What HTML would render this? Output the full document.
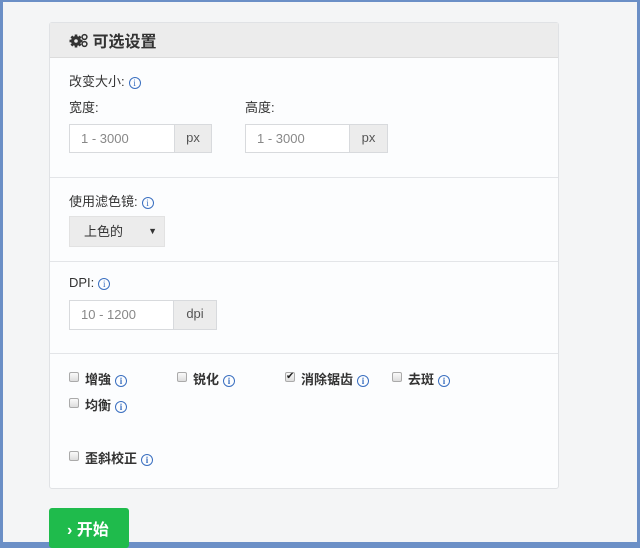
<!DOCTYPE html>
<html><head><meta charset="utf-8"><style>
*{box-sizing:border-box;margin:0;padding:0}
body{width:640px;height:546px;overflow:hidden;background:#6b8fc6;font-family:"Liberation Sans","Noto Sans CJK SC",sans-serif;color:#333;position:relative}
#frame{position:absolute;left:3px;top:2px;right:3px;bottom:4px;background:#f4f5f6}
.a{position:absolute}
#panel{left:46px;top:20px;width:510px;height:467px;background:#fcfdfe;border:1px solid #e0e2e5;border-radius:3px}
#hdr{left:0;top:0;width:508px;height:35px;background:#ececec;border-bottom:1px solid #dcdcdc;font-size:16px;font-weight:bold;color:#333;padding:5px 0 0 19px}
.sep{left:0;width:508px;height:1px;background:#e3e5e8}
.lbl{font-size:13px;color:#333}
.i{display:inline-block;width:12px;height:12px;border:1px solid #3a6fc0;border-radius:50%;color:#3a6fc0;font-size:9px;line-height:10px;text-align:center;font-family:"Liberation Serif",serif;vertical-align:0px;margin-left:4px}
.in{border:1px solid #d8dadd;background:#fff;font-size:13px;color:#888;padding-left:11px}
.ad{border:1px solid #d8dadd;background:#ececec;font-size:13px;color:#555;text-align:center}
.cb{width:10px;height:10px;border:1px solid #aaa;background:linear-gradient(#fafafa,#ddd);border-radius:2px}
.cl{font-size:13px;font-weight:bold;color:#333}
</style></head><body>
<div id="frame">
<div id="panel" class="a">
<div id="hdr" class="a"><svg width="19" height="15" viewBox="0 0 19 15" style="vertical-align:-1px"><g fill="#333"><circle cx="7" cy="8" r="5"/><g stroke="#333" stroke-width="2.6"><line x1="7" y1="1.5" x2="7" y2="14.5"/><line x1="0.5" y1="8" x2="13.5" y2="8"/><line x1="2.4" y1="3.4" x2="11.6" y2="12.6"/><line x1="11.6" y1="3.4" x2="2.4" y2="12.6"/></g><circle cx="7" cy="8" r="1.8" fill="#ececec"/><circle cx="15.5" cy="4" r="2.4" fill="none" stroke="#333" stroke-width="1.5"/><circle cx="15.5" cy="11" r="2.4" fill="none" stroke="#333" stroke-width="1.5"/></g></svg> 可选设置</div>
<div class="a lbl" style="left:19px;top:48px">改变大小:<span class="i">i</span></div>
<div class="a lbl" style="left:19px;top:74px">宽度:</div>
<div class="a lbl" style="left:195px;top:74px">高度:</div>
<div class="a in" style="left:19px;top:101px;width:106px;height:29px;line-height:27px">1 - 3000</div>
<div class="a ad" style="left:124px;top:101px;width:38px;height:29px;line-height:25px">px</div>
<div class="a in" style="left:195px;top:101px;width:105px;height:29px;line-height:27px">1 - 3000</div>
<div class="a ad" style="left:299px;top:101px;width:39px;height:29px;line-height:25px">px</div>
<div class="a sep" style="top:154px"></div>
<div class="a lbl" style="left:19px;top:168px">使用滤色镜:<span class="i">i</span></div>
<div class="a" style="left:19px;top:193px;width:96px;height:31px;background:#ececec;border:1px solid #e2e2e2;font-size:13px;line-height:29px;padding-left:14px;color:#333">上色的<span style="position:absolute;right:7px;top:0;font-size:9px">▼</span></div>
<div class="a sep" style="top:238px"></div>
<div class="a lbl" style="left:19px;top:252px">DPI:<span class="i">i</span></div>
<div class="a in" style="left:19px;top:277px;width:105px;height:30px;line-height:28px">10 - 1200</div>
<div class="a ad" style="left:123px;top:277px;width:44px;height:30px;line-height:26px">dpi</div>
<div class="a sep" style="top:330px"></div>
<div class="a cb" style="left:19px;top:349px"></div><div class="a cl" style="left:35px;top:346px">增強<span class="i">i</span></div>
<div class="a cb" style="left:127px;top:349px"></div><div class="a cl" style="left:143px;top:346px">锐化<span class="i">i</span></div>
<div class="a cb" style="left:235px;top:349px;font-size:10px;line-height:8px;text-align:center;color:#222">✔</div><div class="a cl" style="left:251px;top:346px">消除锯齿<span class="i">i</span></div>
<div class="a cb" style="left:342px;top:349px"></div><div class="a cl" style="left:358px;top:346px">去斑<span class="i">i</span></div>
<div class="a cb" style="left:19px;top:375px"></div><div class="a cl" style="left:35px;top:372px">均衡<span class="i">i</span></div>
<div class="a cb" style="left:19px;top:428px"></div><div class="a cl" style="left:35px;top:425px">歪斜校正<span class="i">i</span></div>
</div>
<div class="a" style="left:46px;top:506px;width:80px;height:40px;background:#1fbb4c;border-radius:3px;color:#fff;font-size:16px;font-weight:bold;padding:8px 0 0 18px">› 开始</div>
</div>
</body></html>
